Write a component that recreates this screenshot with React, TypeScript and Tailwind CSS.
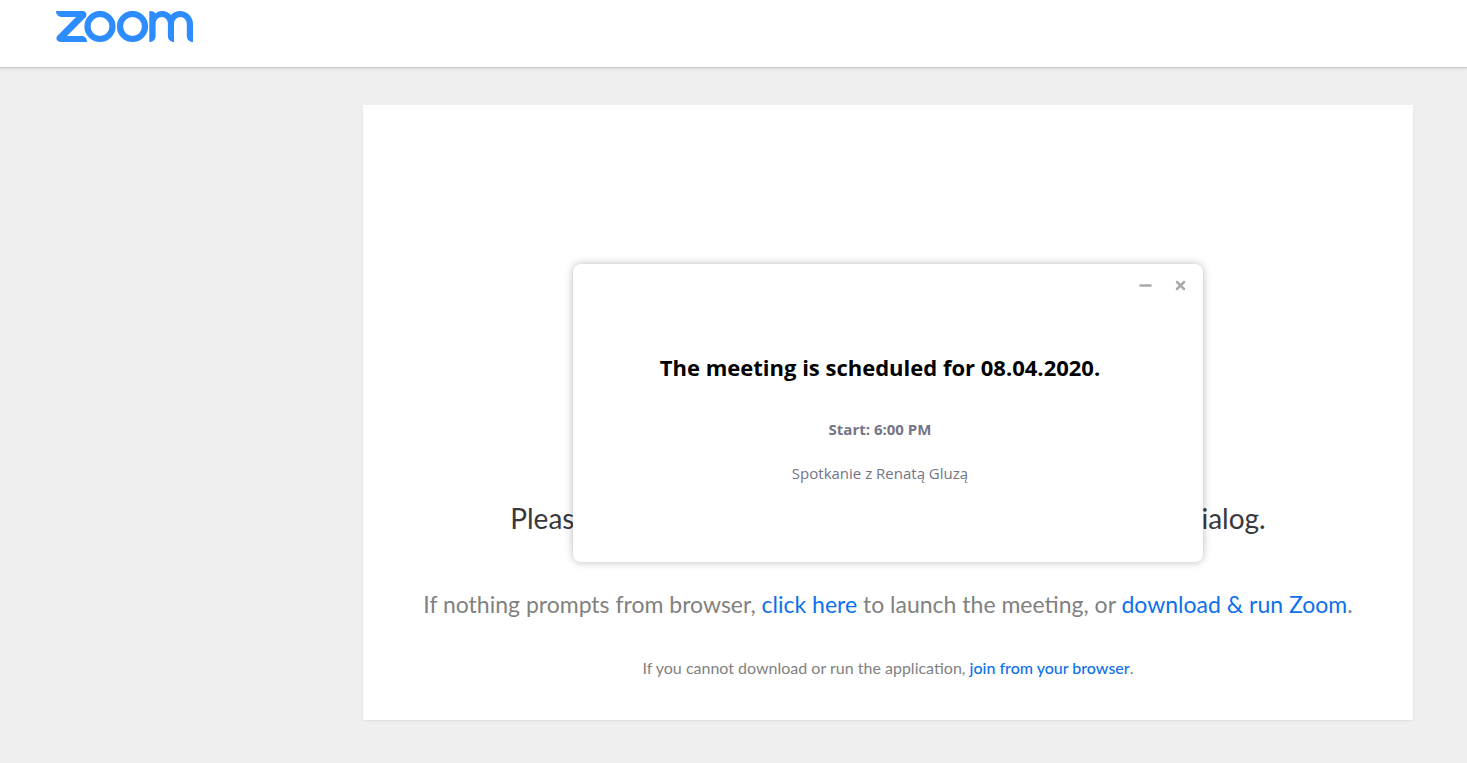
import { useState } from 'react'

function ZoomLogo() {
  return (
    <svg width="138" height="32" viewBox="0 0 138 32" fill="none" aria-hidden="true">
      <path
        d="M0 0h26.500c3.800 0 5.200 4 2.800 6.400L11 25h14.500c3.400 0 5.500 2.400 5.500 6H4.500C.7 31-.9 27 1.700 24.500L20 6H6C2.600 6 0 3.500 0 0Z"
        fill="#2d8cff"
      />
      <circle cx="44" cy="15.500" r="12.500" stroke="#2d8cff" strokeWidth="6.200" />
      <circle cx="76.500" cy="15.500" r="12.500" stroke="#2d8cff" strokeWidth="6.200" />
      <path
        d="M93.300 0c3 0 5 .8 6.200 2.400C101.500.8 103.700 0 106 0c3.600 0 6.700 1.500 9 4 2.300-2.500 5.400-4 9-4 7.300 0 13 5.700 13 13v18c-3.800 0-6.200-2.400-6.200-6V13c0-4-2.900-7-6.400-7s-6.400 3-6.400 7v18c-3.600 0-6.100-2.400-6.100-6V13c0-4-2.600-7-6.100-7s-6.200 3-6.200 7v12c0 3.600-2.400 6-6.300 6Z"
        fill="#2d8cff"
      />
    </svg>
  )
}

export default function App() {
  const [open, setOpen] = useState(true)

  return (
    <div className="min-h-screen bg-[#efefef] font-['Lato',sans-serif]">
      <header className="h-[68px] border-b border-[#cacaca] bg-white px-14 pt-[11px] shadow-[0_1px_3px_rgba(0,0,0,0.1)]">
        <a href="#" aria-label="Zoom" className="inline-block">
          <ZoomLogo />
        </a>
      </header>

      <main className="flex justify-end pt-[37px] pr-[54px] pb-10 pl-6">
        <section className="relative w-full max-w-[1050px] bg-white px-6 pt-[395px] pb-10 text-center shadow-[0_1px_2px_rgba(0,0,0,0.08)]">
          <h1 className="text-[28px] leading-9 text-[#39393d]">
            Please click Open Zoom Meeting if you see the system dialog.
          </h1>
          <p className="mt-[50px] text-[23px] leading-9 text-[#818181]">
            If nothing prompts from browser,{' '}
            <a href="#" className="text-[#0e71eb]">click here</a> to launch the meeting, or{' '}
            <a href="#" className="text-[#0e71eb]">download &amp; run Zoom</a>.
          </p>
          <p className="mt-[34px] text-base text-[#818181]">
            If you cannot download or run the application,{' '}
            <a href="#" className="font-medium text-[#0e71eb]">join from your browser</a>.
          </p>

          {open && (
            <div
              role="dialog"
              aria-labelledby="meeting-title"
              className="absolute top-[159px] left-1/2 h-[298px] w-[630px] -translate-x-1/2 rounded-lg bg-white font-['Open_Sans',sans-serif] shadow-[0_0_8px_rgba(0,0,0,0.28)]"
            >
              <div className="flex justify-end gap-[19px] px-[15px] pt-[14px] text-[#aaaaaa]">
                <button type="button" aria-label="Minimize" className="size-4">
                  <svg width="16" height="16" viewBox="0 0 16 16" stroke="currentColor" strokeWidth="2.500" strokeLinecap="round">
                    <path d="M3.500 7.500h10" />
                  </svg>
                </button>
                <button type="button" aria-label="Close" onClick={() => setOpen(false)} className="size-4">
                  <svg width="16" height="16" viewBox="0 0 16 16" stroke="currentColor" strokeWidth="2.500" strokeLinecap="round">
                    <path d="m5 4 7 7m0-7-7 7" />
                  </svg>
                </button>
              </div>
              <div className="pt-[57px] pr-4">
                <h2 id="meeting-title" className="text-[22px] leading-8 font-bold text-black">
                  The meeting is scheduled for 08.04.2020.
                </h2>
                <p className="mt-[34px] text-[15px] leading-6 font-bold text-[#747487]">Start: 6:00 PM</p>
                <p className="mt-5 text-[15px] leading-6 text-[#747487]">Spotkanie z Renatą Gluzą</p>
              </div>
            </div>
          )}
        </section>
      </main>
    </div>
  )
}
